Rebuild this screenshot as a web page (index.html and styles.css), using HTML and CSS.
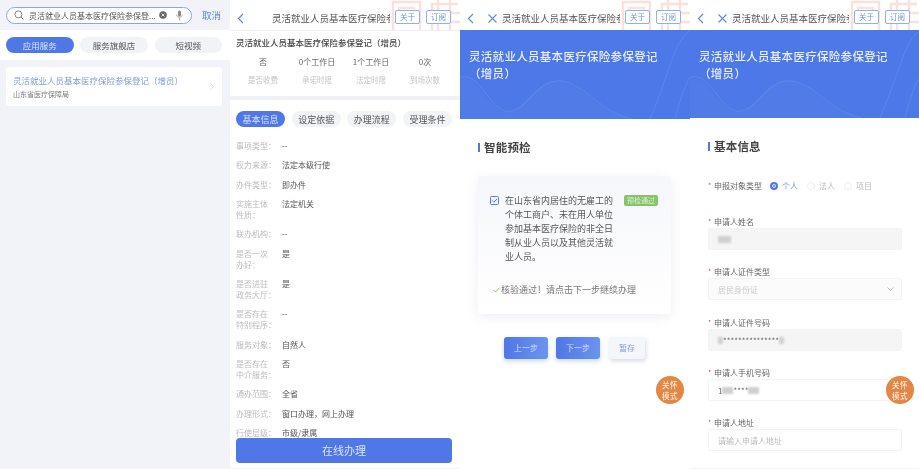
FILE: index.html
```html
<!DOCTYPE html>
<html>
<head>
    <title>灵活就业人员基本医疗保险参保登记</title>
    <link rel="stylesheet" href="styles.css">
</head>
<body>
<div class="screens">

    <!-- 搜索结果 -->
    <section class="screen search-screen">
        <div class="search-bar">
            <div class="search-box">
                <svg class="search-icon" width="10" height="10" viewBox="0 0 10 10"><circle cx="4.4" cy="4.4" r="3.5" fill="none" stroke="#777" stroke-width="0.9"/><path d="M7 7l2.4 2.4" stroke="#777" stroke-width="0.9"/></svg>
                <span class="search-text">灵活就业人员基本医疗保险参保登...</span>
                <svg class="clear-icon" width="8" height="8" viewBox="0 0 8 8"><circle cx="4" cy="4" r="3.8" fill="#666"/><path d="M2.6 2.6l2.8 2.8M5.4 2.6l-2.8 2.8" stroke="#fff" stroke-width="0.8"/></svg>
                <svg class="mic-icon" width="7" height="11" viewBox="0 0 7 11"><rect x="2" y="0.5" width="3" height="6" rx="1.5" fill="#888"/><path d="M0.7 4.5c0 3.7 5.6 3.7 5.6 0M3.5 7.5v3" fill="none" stroke="#888" stroke-width="0.7"/></svg>
            </div>
            <span class="cancel">取消</span>
        </div>
        <div class="search-tabs">
            <span class="pill pill-wide active">应用服务</span>
            <span class="pill pill-wide">服务旗舰店</span>
            <span class="pill pill-wide">短视频</span>
        </div>
        <div class="result-card">
            <div>
                <div class="result-title">灵活就业人员基本医疗保险参保登记（增员）</div>
                <div class="result-org">山东省医疗保障局</div>
            </div>
            <svg width="4" height="7" viewBox="0 0 4 7"><path d="M0.5 0.5l3 3-3 3" fill="none" stroke="#ccc" stroke-width="0.7"/></svg>
        </div>
    </section>

    <!-- 事项详情 -->
    <section class="screen detail-screen">
        <header class="top-bar">
            <svg class="stamp" width="70" height="30" viewBox="0 0 70 30"><g fill="none" stroke="#f7e2dc" stroke-width="2.4"><path d="M3 30V2h27v28M9 8h15v7H9zM3 22h27"/><path d="M42 30V4h26M48 0v30M60 0v30M42 13h28M42 22h28"/></g></svg>
            <svg class="back" width="7" height="11" viewBox="0 0 7 11"><path d="M6 1L1.5 5.5 6 10" fill="none" stroke="#5b8ae6" stroke-width="1.2"/></svg>
            <span class="top-title detail-title">灵活就业人员基本医疗保险参</span>
            <span class="top-btn">关于</span>
            <span class="top-btn">订阅</span>
        </header>
        <div class="summary">
            <h2>灵活就业人员基本医疗保险参保登记（增员）</h2>
            <div class="stats">
                <div class="stat"><b>否</b><span>是否收费</span></div>
                <div class="stat"><b>0个工作日</b><span>承诺时限</span></div>
                <div class="stat"><b>1个工作日</b><span>法定时限</span></div>
                <div class="stat"><b>0次</b><span>到场次数</span></div>
            </div>
        </div>
        <div class="detail-tabs">
            <span class="pill active">基本信息</span>
            <span class="pill">设定依据</span>
            <span class="pill">办理流程</span>
            <span class="pill">受理条件</span>
        </div>
        <dl class="info-list">
            <div class="info-row"><dt>事项类型：</dt><dd>--</dd></div>
            <div class="info-row"><dt>权力来源：</dt><dd>法定本级行使</dd></div>
            <div class="info-row"><dt>办件类型：</dt><dd>即办件</dd></div>
            <div class="info-row"><dt>实施主体<br>性质：</dt><dd>法定机关</dd></div>
            <div class="info-row"><dt>联办机构：</dt><dd>--</dd></div>
            <div class="info-row"><dt>是否一次<br>办好：</dt><dd>是</dd></div>
            <div class="info-row"><dt>是否进驻<br>政务大厅：</dt><dd>是</dd></div>
            <div class="info-row"><dt>是否存在<br>特别程序：</dt><dd>--</dd></div>
            <div class="info-row"><dt>服务对象：</dt><dd>自然人</dd></div>
            <div class="info-row"><dt>是否存在<br>中介服务：</dt><dd>否</dd></div>
            <div class="info-row"><dt>通办范围：</dt><dd>全省</dd></div>
            <div class="info-row"><dt>办理形式：</dt><dd>窗口办理，网上办理</dd></div>
            <div class="info-row"><dt>行使层级：</dt><dd>市级/隶属</dd></div>
        </dl>
        <div class="online-btn">在线办理</div>
    </section>

    <!-- 智能预检 -->
    <section class="screen">
        <header class="top-bar">
            <svg class="stamp" width="70" height="30" viewBox="0 0 70 30"><g fill="none" stroke="#f7e2dc" stroke-width="2.4"><path d="M3 30V2h27v28M9 8h15v7H9zM3 22h27"/><path d="M42 30V4h26M48 0v30M60 0v30M42 13h28M42 22h28"/></g></svg>
            <svg class="back" width="7" height="11" viewBox="0 0 7 11"><path d="M6 1L1.5 5.5 6 10" fill="none" stroke="#5b8ae6" stroke-width="1.2"/></svg>
            <svg class="close" width="9" height="9" viewBox="0 0 9 9"><path d="M0.5 0.5l8 8M8.5 0.5l-8 8" stroke="#5b8ae6" stroke-width="1.1"/></svg>
            <span class="top-title">灵活就业人员基本医疗保险参</span>
            <span class="top-btn">关于</span>
            <span class="top-btn">订阅</span>
        </header>
        <div class="hero">
            <svg class="hero-waves" width="230" height="89" viewBox="0 0 230 89"><path d="M0 50c15-8 25 26 45 32 20 5 30-40 60-30 25 9 40 35 70 37H0z" fill="#fff" fill-opacity="0.03"/><g fill="none" stroke="#fff" stroke-opacity="0.1"><path d="M0 48c18-8 28 28 45 33 22 5 32-38 62-29 25 9 35 31 65 37"/><path d="M190 89c12-28 22-62 28-74 3-6 8-11 12-15"/><path d="M215 89c4-15 8-30 15-42"/></g></svg>
            <div class="hero-title">灵活就业人员基本医疗保险参保登记<br>（增员）</div>
        </div>
        <h3 class="section-head check-head">智能预检</h3>
        <div class="check-card">
            <div class="check-main">
                <svg class="checkbox" width="9" height="9" viewBox="0 0 9 9"><rect x="0.5" y="0.5" width="8" height="8" rx="1" fill="#eef2fd" stroke="#5b80e0"/><path d="M2 4.4l1.8 1.8L7 3" fill="none" stroke="#5b80e0"/></svg>
                <p>在山东省内居住的无雇工的个体工商户、未在用人单位参加基本医疗保险的非全日制从业人员以及其他灵活就业人员。</p>
                <span class="passed">预检通过</span>
            </div>
            <div class="check-note">
                <svg width="7" height="6" viewBox="0 0 7 6"><path d="M0.5 3l2 2L6.5 0.8" fill="none" stroke="#86c46c"/></svg>
                <span>核验通过！请点击下一步继续办理</span>
            </div>
        </div>
        <div class="step-btns">
            <span class="step-btn primary">上一步</span>
            <span class="step-btn primary">下一步</span>
            <span class="step-btn save">暂存</span>
        </div>
        <div class="care">关怀<br>模式</div>
    </section>

    <!-- 基本信息 -->
    <section class="screen last-screen">
        <header class="top-bar">
            <svg class="stamp" width="70" height="30" viewBox="0 0 70 30"><g fill="none" stroke="#f7e2dc" stroke-width="2.4"><path d="M3 30V2h27v28M9 8h15v7H9zM3 22h27"/><path d="M42 30V4h26M48 0v30M60 0v30M42 13h28M42 22h28"/></g></svg>
            <svg class="back" width="7" height="11" viewBox="0 0 7 11"><path d="M6 1L1.5 5.5 6 10" fill="none" stroke="#5b8ae6" stroke-width="1.2"/></svg>
            <svg class="close" width="9" height="9" viewBox="0 0 9 9"><path d="M0.5 0.5l8 8M8.5 0.5l-8 8" stroke="#5b8ae6" stroke-width="1.1"/></svg>
            <span class="top-title">灵活就业人员基本医疗保险参</span>
            <span class="top-btn">关于</span>
            <span class="top-btn">订阅</span>
        </header>
        <div class="hero hero-short">
            <svg class="hero-waves" width="230" height="88" viewBox="0 0 230 88"><path d="M0 50c15-8 25 26 45 32 20 5 30-40 60-30 25 9 40 34 70 36H0z" fill="#fff" fill-opacity="0.03"/><g fill="none" stroke="#fff" stroke-opacity="0.1"><path d="M0 48c18-8 28 28 45 33 22 5 32-38 62-29 25 9 35 30 65 36"/><path d="M190 88c12-28 22-61 28-73 3-6 8-11 12-15"/><path d="M215 88c4-15 8-30 15-42"/></g></svg>
            <div class="hero-title">灵活就业人员基本医疗保险参保登记<br>（增员）</div>
        </div>
        <h3 class="section-head form-head">基本信息</h3>
        <form class="apply-form">
            <div class="radio-row">
                <label class="field-label">申报对象类型</label>
                <span class="radio checked"></span><span class="radio-text on">个人</span>
                <span class="radio"></span><span class="radio-text">法人</span>
                <span class="radio"></span><span class="radio-text">项目</span>
            </div>
            <label class="field-label">申请人姓名</label>
            <div class="field filled"><i class="mask mask-name"></i></div>
            <label class="field-label">申请人证件类型</label>
            <div class="field locked">
                <span>居民身份证</span>
                <svg width="7" height="4" viewBox="0 0 7 4"><path d="M0.5 0.5l3 3 3-3" fill="none" stroke="#aaa" stroke-width="0.7"/></svg>
            </div>
            <label class="field-label">申请人证件号码</label>
            <div class="field filled"><i class="mask mask-short"></i><span class="stars">***************</span><i class="mask mask-short"></i></div>
            <label class="field-label">申请人手机号码</label>
            <div class="field"><span class="phone">1</span><i class="mask mask-mid"></i><span class="stars">****</span><i class="mask mask-mid"></i></div>
            <label class="field-label">申请人地址</label>
            <div class="field"><span class="placeholder">请输入申请人地址</span></div>
        </form>
        <div class="care">关怀<br>模式</div>
    </section>
</div>
</body>
</html>
```

FILE: styles.css
```css
* {
    box-sizing: border-box;
}
html, body {
    margin: 0;
    padding: 0;
    height: 100%;
    overflow: hidden;
}
body {
    font-family: "Noto Sans CJK SC", "Noto Sans", sans-serif;
    background-color: #fff;
    color: #444;
    font-size: 10px;
}
p, h2, h3, dl, dd {
    margin: 0;
}
.screens {
    display: grid;
    grid-template-columns: 230px 230px 230px 229px;
    height: 469px;
    filter: blur(0.35px);
}
.screen {
    position: relative;
    height: 469px;
    overflow: hidden;
    background-color: #fff;
}
.detail-screen, .last-screen {
    border-bottom: 1px solid #f0f1f3;
}

/* 搜索结果 */
.search-screen {
    background-color: #f1f3f8;
}
.search-bar {
    display: flex;
    align-items: center;
    height: 30px;
    padding: 0 8px 0 6px;
    gap: 10px;
}
.search-box {
    display: flex;
    align-items: center;
    width: 186px;
    height: 17px;
    padding: 0 8px 0 7px;
    background-color: #fff;
    border: 1px solid #8aa6e2;
    border-radius: 9px;
}
.search-icon {
    margin-right: 5px;
    flex: none;
}
.search-text {
    flex: 1;
    font-size: 8px;
    color: #555;
    white-space: nowrap;
}
.clear-icon {
    flex: none;
    margin-left: 3px;
}
.mic-icon {
    flex: none;
    margin-left: 9px;
}
.cancel {
    color: #6286dc;
    font-size: 9.5px;
    white-space: nowrap;
}
.search-tabs {
    display: flex;
    justify-content: space-between;
    align-items: center;
    height: 30px;
    padding: 0 8px 0 6px;
    background-color: #fff;
}
.pill {
    display: flex;
    align-items: center;
    justify-content: center;
    height: 16px;
    padding: 0 7px;
    border-radius: 8px;
    background-color: #f2f3f7;
    color: #555;
    font-size: 8.5px;
    white-space: nowrap;
}
.pill-wide {
    width: 67.5px;
}
.pill.active {
    background-color: #4f77e6;
    color: #d9e3fb;
}
.result-card {
    display: flex;
    align-items: center;
    justify-content: space-between;
    height: 39px;
    margin: 7px 8px 0 6px;
    padding: 0 8px 0 7px;
    background-color: #fff;
    border-radius: 4px;
}
.result-title {
    color: #7e9bdc;
    font-size: 8.5px;
    line-height: 13px;
}
.result-org {
    margin-top: 2px;
    color: #777;
    font-size: 7px;
    line-height: 10px;
}

/* 顶栏 */
.top-bar {
    position: relative;
    display: flex;
    align-items: center;
    height: 30px;
    padding: 6px 9px 0 7px;
}
.stamp {
    position: absolute;
    right: 0;
    top: 0;
}
.back {
    position: relative;
    flex: none;
    margin-right: 14px;
}
.close {
    position: relative;
    flex: none;
    margin-right: 5px;
}
.top-title {
    position: relative;
    width: 120px;
    margin-right: 5px;
    overflow: hidden;
    color: #555;
    font-size: 9.5px;
    line-height: 14px;
    white-space: nowrap;
}
.detail-title {
    margin-left: 14px;
    width: 118px;
}
.top-btn {
    position: relative;
    flex: none;
    width: 25px;
    height: 14px;
    margin-top: -3px;
    margin-left: 6px;
    border: 1px solid #8fb0e8;
    border-radius: 2px;
    color: #6d91dc;
    background-color: #fff;
    font-size: 7.5px;
    line-height: 12px;
    text-align: center;
}
.top-title + .top-btn {
    margin-left: 0;
}

/* 事项详情 */
.summary {
    height: 70px;
    padding: 3px 6px 0;
    border-bottom: 4px solid #f0f1f4;
    border-top: 1px solid #eef0f4;
}
.summary h2 {
    color: #444;
    font-size: 8.5px;
    line-height: 16px;
    font-weight: 500;
}
.stats {
    display: grid;
    grid-template-columns: repeat(4, 54px);
    margin-top: 6px;
}
.stat {
    display: flex;
    flex-direction: column;
    align-items: center;
    gap: 7px;
}
.stat b {
    color: #666;
    font-size: 8px;
    line-height: 11px;
    font-weight: 400;
}
.stat span {
    color: #c4c4c4;
    font-size: 7.5px;
    line-height: 11px;
}
.detail-tabs {
    display: flex;
    justify-content: space-between;
    padding: 11px 8px 0 6px;
}
.detail-tabs .pill {
    width: 49px;
    padding: 0;
    font-size: 9px;
}
.info-list {
    padding: 13px 8px 0 6px;
}
.info-row {
    display: flex;
    margin-bottom: 8.35px;
    font-size: 8px;
    line-height: 11px;
}
.info-row dt {
    width: 46px;
    color: #bbb;
}
.info-row dd {
    color: #555;
}
.online-btn {
    position: absolute;
    left: 6px;
    top: 438px;
    width: 216px;
    height: 25px;
    background-color: #4f77e6;
    border-radius: 4px;
    color: #dbe4fb;
    font-size: 11px;
    line-height: 25px;
    text-align: center;
}

/* 蓝色标题 */
.hero {
    position: relative;
    height: 89px;
    padding: 18px 9px 0;
    background-color: #4c78e8;
}
.hero-short {
    height: 88px;
}
.hero-waves {
    position: absolute;
    left: 0;
    top: 0;
}
.hero-title {
    position: relative;
    color: #e8eefd;
    font-size: 11.5px;
    font-weight: 500;
    line-height: 17px;
    letter-spacing: 0.3px;
    white-space: nowrap;
}
.section-head {
    position: relative;
    padding-left: 6px;
    color: #444;
    font-size: 11.5px;
    line-height: 14px;
    font-weight: 700;
    letter-spacing: 0.2px;
}
.section-head::before {
    content: "";
    position: absolute;
    left: 0;
    top: 3px;
    width: 2px;
    height: 9px;
    background-color: #4f77e6;
}

/* 智能预检 */
.check-head {
    margin: 21px 0 0 18px;
}
.check-card {
    margin: 22px 19px 0 18px;
    height: 138px;
    padding: 18px 13px 0 12px;
    border-radius: 4px;
    background: linear-gradient(#f6f7fb, #fff);
    box-shadow: 0 3px 12px rgba(120, 135, 170, 0.13);
}
.check-main {
    display: flex;
    align-items: flex-start;
}
.checkbox {
    flex: none;
    margin-top: 2px;
    margin-right: 6px;
}
.check-main p {
    width: 108px;
    color: #555;
    font-size: 9px;
    line-height: 14px;
}
.passed {
    flex: none;
    margin-left: 11px;
    margin-top: 1px;
    width: 34px;
    height: 11px;
    background-color: #86c46c;
    border-radius: 2px;
    color: #dcefd3;
    font-size: 7px;
    line-height: 11px;
    text-align: center;
}
.check-note {
    display: flex;
    align-items: center;
    gap: 1px;
    margin-top: 19px;
    margin-left: 3px;
    color: #777;
    font-size: 9px;
    line-height: 14px;
}
.step-btns {
    display: flex;
    margin: 23px 0 0 44px;
}
.step-btn {
    width: 44px;
    height: 22px;
    margin-right: 8px;
    border-radius: 3px;
    font-size: 8px;
    line-height: 22px;
    text-align: center;
}
.step-btn.primary {
    background: linear-gradient(90deg, #4f77e6, #6d93ee);
    color: #d3dffa;
    box-shadow: 0 2px 5px rgba(79, 119, 230, 0.3);
}
.step-btn.save {
    width: 36px;
    margin-left: 1px;
    background-color: #f5f6fa;
    color: #7d97d8;
    box-shadow: 1px 2px 4px rgba(120, 130, 160, 0.3);
}
.care {
    position: absolute;
    left: 196px;
    top: 376px;
    width: 28px;
    height: 28px;
    padding-top: 3px;
    border-radius: 50%;
    background-color: #e38744;
    color: #fbe9da;
    font-size: 7.5px;
    font-weight: 500;
    letter-spacing: 0.4px;
    line-height: 11px;
    text-align: center;
}

/* 基本信息表单 */
.form-head {
    margin: 21px 0 0 18px;
}
.apply-form {
    margin: 0 17px 0 18px;
}
.field-label {
    display: block;
    position: relative;
    height: 11px;
    padding-left: 6px;
    color: #666;
    font-size: 8px;
    line-height: 11px;
    white-space: nowrap;
}
.field-label::before {
    content: "*";
    position: absolute;
    left: 0;
    top: 0;
    color: #d9534f;
    font-size: 7px;
}
.radio-row {
    display: flex;
    align-items: center;
    height: 11px;
    margin-top: 27px;
    margin-bottom: 25px;
}
.radio-row .field-label {
    width: 62px;
}
.radio {
    flex: none;
    width: 8px;
    height: 8px;
    margin-right: 4px;
    border: 1px solid #eee;
    border-radius: 50%;
}
.radio.checked {
    border: 2px solid #4f77e6;
    background-color: #4f77e6;
    box-shadow: inset 0 0 0 1px #fff;
}
.radio-text {
    width: 25px;
    color: #bbb;
    font-size: 8px;
}
.radio-text.on {
    color: #7d97d8;
}
.field {
    display: flex;
    align-items: center;
    height: 22px;
    margin: 1px 0 16px;
    padding: 0 9px;
    border: 1px solid #f2f3f5;
    border-radius: 2px;
    background-color: #fff;
    font-size: 8px;
}
.field.filled {
    background-color: #f5f5f6;
}
.field.locked {
    justify-content: space-between;
    margin-bottom: 17px;
    background-color: #fbfbfc;
    color: #ccc;
    padding-right: 7px;
}
.placeholder {
    color: #bbb;
}
.stars, .phone {
    color: #666;
    font-size: 8px;
    letter-spacing: 0;
}
.mask {
    display: block;
    height: 7px;
    background-color: #cfcfd2;
    filter: blur(1.2px);
}
.mask-name {
    width: 13px;
}
.mask-short {
    width: 5px;
}
.mask-mid {
    width: 11px;
}
```
